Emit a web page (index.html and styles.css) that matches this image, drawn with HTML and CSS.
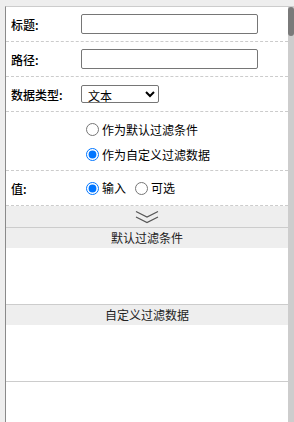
FILE: index.html
```html
<!DOCTYPE html>
<html>
<head>
<meta charset="utf-8">
<link rel="stylesheet" href="styles.css">
</head>
<body>
<div class="frame">
  <div class="content">
    <div class="row">
      <div class="label">标题:</div>
      <div class="field"><input class="text" type="text"></div>
    </div>
    <div class="row">
      <div class="label">路径:</div>
      <div class="field"><input class="text" type="text"></div>
    </div>
    <div class="row">
      <div class="label">数据类型:</div>
      <div class="field"><select class="sel"><option>文本</option></select></div>
    </div>
    <div class="row row-tall">
      <div class="label"></div>
      <div class="field stack">
        <label class="opt"><input type="radio" name="f">作为默认过滤条件</label>
        <label class="opt"><input type="radio" name="f" checked>作为自定义过滤数据</label>
      </div>
    </div>
    <div class="row">
      <div class="label">值:</div>
      <div class="field">
        <label class="opt"><input type="radio" name="v" checked>输入</label>
        <label class="opt"><input type="radio" name="v">可选</label>
      </div>
    </div>
    <div class="toggle">
      <svg width="24" height="14" viewBox="0 0 24 14"><path d="M1 1.5 L12 7 L23 1.5 M1 7 L12 12.5 L23 7" fill="none" stroke="#555" stroke-width="1.2"/></svg>
    </div>
    <div class="section">
      <div class="sec-head">默认过滤条件</div>
      <div class="sec-body"></div>
    </div>
    <div class="section">
      <div class="sec-head">自定义过滤数据</div>
      <div class="sec-body"></div>
    </div>
    <div class="rest"></div>
  </div>
  <div class="scrollbar"><div class="thumb"></div></div>
</div>
</body>
</html>
```
FILE: styles.css
```css
html, body {
  margin: 0;
  height: 100%;
}
body {
  background: #eeeeee;
  padding: 6px 0 0 5px;
  box-sizing: border-box;
  font-family: "Microsoft YaHei", "Noto Sans CJK SC", sans-serif;
  font-size: 12px;
  color: #000;
  overflow: hidden;
}
.frame {
  display: flex;
  height: 100%;
  border-left: 1px solid #8a8a8a;
  border-top: 1px solid #cccccc;
  box-sizing: border-box;
}
.content {
  flex: 1;
  background: #fff;
  display: flex;
  flex-direction: column;
}
.row {
  display: flex;
  align-items: center;
  height: 34px;
  border-bottom: 1px dashed #cccccc;
}
.row-tall {
  height: 58px;
}
.label {
  width: 70px;
  padding-left: 5px;
  flex: none;
  font-weight: 500;
}
.field {
  display: flex;
  align-items: center;
}
.stack {
  flex-direction: column;
  align-items: flex-start;
  gap: 5px;
  padding-top: 2px;
}
.text {
  width: 177px;
  height: 20px;
  box-sizing: border-box;
  border: 1px solid #767676;
  border-radius: 2px;
  margin: 0;
  padding: 1px 2px;
  font-size: 12px;
}
.sel {
  width: 78px;
  height: 18px;
  box-sizing: border-box;
  margin: 0;
  font-size: 12px;
  font-family: "Noto Sans CJK SC", sans-serif;
  padding: 0 0 0 2px;
  border: 1px solid #767676;
  border-radius: 2px;
  background: #fff;
  color: #000;
}
.opt {
  display: flex;
  align-items: center;
  line-height: 20px;
}
.opt input {
  margin: 0 3px 0 5px;
  width: 13px;
  height: 13px;
}
.opt + .opt {
  margin-left: 4px;
}
.stack .opt + .opt {
  margin-left: 0;
}
.toggle {
  height: 21px;
  background: #eeeeee;
  border-bottom: 1px solid #cccccc;
  display: flex;
  justify-content: center;
  align-items: center;
}
.section {
  border-bottom: 1px solid #cccccc;
}
.sec-head {
  height: 20px;
  line-height: 20px;
  background: #eeeeee;
  text-align: center;
  color: #222;
}
.sec-body {
  height: 56px;
}
.rest {
  flex: 1;
}
.scrollbar {
  width: 6px;
  flex: none;
  background: #cdcdcd;
}
.thumb {
  height: 29px;
  background: #7a7a7a;
  border-radius: 3px;
}
```
